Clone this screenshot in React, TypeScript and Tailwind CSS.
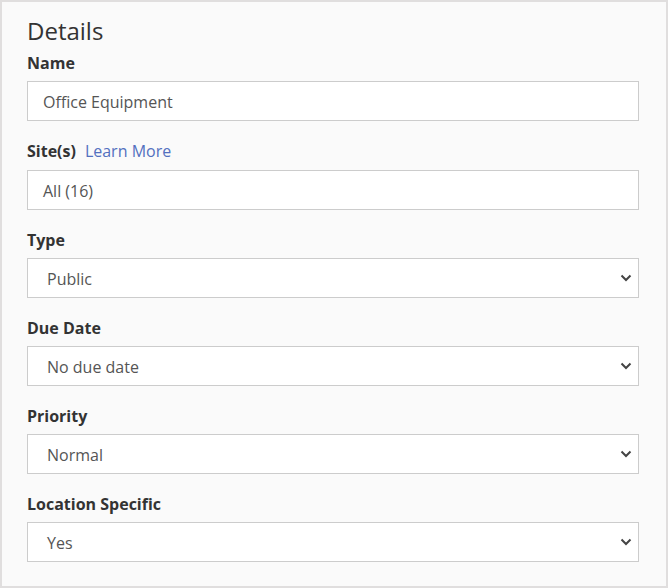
import React from "react";

type Field = {
  label: string;
  value: string;
  select?: boolean;
  link?: string;
};

const fields: Field[] = [
  { label: "Name", value: "Office Equipment" },
  { label: "Site(s)", value: "All (16)", link: "Learn More" },
  { label: "Type", value: "Public", select: true },
  { label: "Due Date", value: "No due date", select: true },
  { label: "Priority", value: "Normal", select: true },
  { label: "Location Specific", value: "Yes", select: true },
];

function Chevron() {
  return (
    <svg width="12" height="8" viewBox="0 0 12 8" className="text-[#444]">
      <path d="M1.5 1.5 L6 6 L10.5 1.5" fill="none" stroke="currentColor" strokeWidth="2" />
    </svg>
  );
}

export default function App() {
  return (
    <div className="w-[668px] h-[588px] border-2 border-[#e0dede] bg-[#fafafa] pt-[14px] pl-[25px] pr-[27px] font-['Open_Sans',sans-serif] text-[#333]">
      <h2 className="text-[24px] leading-[30px] mb-[5px] text-[#333]">Details</h2>
      <div className="flex flex-col gap-[18px]">
        {fields.map((f) => (
          <div key={f.label} className="flex flex-col">
            <div className={`flex items-center gap-[9px] h-[24px] ${f.link ? "mb-[7px]" : "mb-[6px]"}`}>
              <span className="text-[16px] font-bold leading-[24px] text-[#333]">{f.label}</span>
              {f.link && (
                <a href="#" className="text-[16px] leading-[24px] text-[#5370bf]">
                  {f.link}
                </a>
              )}
            </div>
            <div
              className={`flex items-center justify-between h-[40px] border border-[#cccccc] bg-white ${
                f.select ? "pl-[19px] pr-[6px]" : "px-[15px]"
              }`}
            >
              <span className="text-[16px] text-[#555] pt-px">{f.value}</span>
              {f.select && <Chevron />}
            </div>
          </div>
        ))}
      </div>
    </div>
  );
}
